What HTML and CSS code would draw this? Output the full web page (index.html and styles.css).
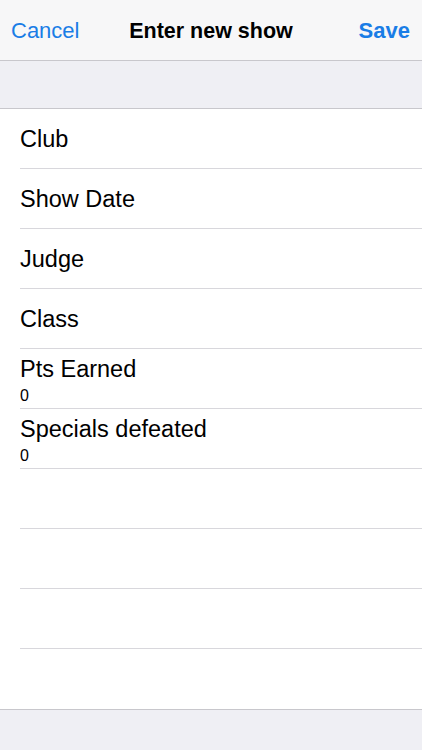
FILE: index.html
```html
<!DOCTYPE html>
<html lang="en">
<head>
    <meta charset="UTF-8" />
    <meta name="viewport" content="width=device-width, initial-scale=1.0" />
    <title>Enter new show</title>
    <link rel="stylesheet" href="styles.css">
</head>
<body>

    <!-- Top bar -->
    <nav class="navbar">
        <a href="#" class="nav-btn">Cancel</a>
        <span class="nav-title">Enter new show</span>
        <a href="#" class="nav-btn nav-save">Save</a>
    </nav>

    <div class="spacer"></div>

    <!-- Form rows -->
    <main class="list">
        <div class="row"><span class="row-label">Club</span></div>
        <div class="row"><span class="row-label">Show Date</span></div>
        <div class="row"><span class="row-label">Judge</span></div>
        <div class="row"><span class="row-label">Class</span></div>
        <div class="row row-value">
            <span class="row-label">Pts Earned</span>
            <span class="row-sub">0</span>
        </div>
        <div class="row row-value">
            <span class="row-label">Specials defeated</span>
            <span class="row-sub">0</span>
        </div>
        <div class="row"></div>
        <div class="row"></div>
        <div class="row"></div>
        <div class="row last"></div>
    </main>

    <footer class="footer"></footer>

</body>
</html>
```

FILE: styles.css
```css
body {
    font-family: 'Liberation Sans', Arial, sans-serif;
    background-color: #efeff4;
    margin: 0;
    color: #000;
}

.navbar {
    background-color: #f7f7f8;
    height: 60px;
    display: flex;
    align-items: center;
    justify-content: space-between;
    padding: 0 12px 0 11px;
    border-bottom: 1px solid #c8c7cc;
    position: relative;
}

.nav-btn {
    color: #1a7de6;
    font-size: 22px;
    text-decoration: none;
    margin-top: 2px;
}

.nav-save {
    font-weight: bold;
}

.nav-title {
    position: absolute;
    left: 0;
    right: 0;
    text-align: center;
    font-size: 21.5px;
    font-weight: bold;
    margin-top: 2px;
    pointer-events: none;
}

.spacer {
    height: 47px;
    border-bottom: 1px solid #c8c7cc;
}

.list {
    background-color: #fff;
    border-bottom: 1px solid #c8c7cc;
}

.row {
    height: 59px;
    margin-left: 20px;
    border-bottom: 1px solid #d8d7dc;
    display: flex;
    flex-direction: column;
    justify-content: center;
}

    .row.last {
        border-bottom: none;
        height: 60px;
    }

.row-label {
    font-size: 23.5px;
    line-height: 26px;
}

.row-value {
    justify-content: flex-start;
    padding-top: 7px;
    height: 52px;
}

.row-sub {
    font-size: 16px;
    line-height: 18px;
    margin-top: 5px;
}

.footer {
    height: 41px;
}
```
